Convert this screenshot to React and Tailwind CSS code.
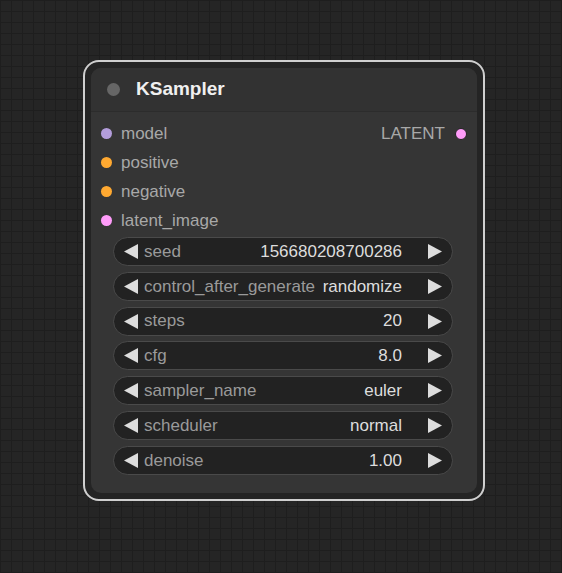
import React from 'react';

const inputs = [
  { name: 'model', color: 'bg-[#b39ddb]' },
  { name: 'positive', color: 'bg-[#ffa931]' },
  { name: 'negative', color: 'bg-[#ffa931]' },
  { name: 'latent_image', color: 'bg-[#ff9cf9]' },
];

const widgets = [
  { label: 'seed', value: '156680208700286' },
  { label: 'control_after_generate', value: 'randomize' },
  { label: 'steps', value: '20' },
  { label: 'cfg', value: '8.0' },
  { label: 'sampler_name', value: 'euler' },
  { label: 'scheduler', value: 'normal' },
  { label: 'denoise', value: '1.00' },
];

const Arrow = ({ dir }) => (
  <svg width="14" height="15" viewBox="0 0 14 15" className="shrink-0">
    {dir === 'left' ? (
      <polygon points="14,0 14,15 0,7.5" fill="#dddddd" />
    ) : (
      <polygon points="0,0 0,15 14,7.5" fill="#dddddd" />
    )}
  </svg>
);

const Widget = ({ label, value }) => (
  <div className="h-[29px] w-[340px] flex items-center rounded-full border border-[#4a4a4a] bg-[#222222] pl-[10px] pr-[10px]">
    <Arrow dir="left" />
    <span className="ml-[6px] text-[#9a9a9a] whitespace-nowrap">{label}</span>
    <span className="ml-auto mr-[26px] text-[#dddddd] whitespace-nowrap">{value}</span>
    <Arrow dir="right" />
  </div>
);

const App = () => {
  return (
    <div
      className="w-[562px] h-[573px] overflow-hidden bg-[#252525] bg-[linear-gradient(to_right,#1e1e1e_1px,transparent_1px),linear-gradient(to_bottom,#1e1e1e_1px,transparent_1px)] bg-[size:11px_11px] pl-[83px] pt-[60px] text-[17px]"
      style={{ fontFamily: '"Liberation Sans", Arial, sans-serif' }}
    >
      {/* selection outline */}
      <div className="w-[402px] h-[441px] rounded-[16px] border-2 border-[#cfcfcf] bg-[#242424] p-[6px]">
        <div className="h-full rounded-[10px] bg-[#353535] overflow-hidden flex flex-col">
          {/* title */}
          <div className="h-[44px] shrink-0 flex items-center bg-[#323232] border-b border-[#2c2c2c] pl-[16px]">
            <div className="w-[13px] h-[13px] rounded-full bg-[#666666]" />
            <span className="ml-[16px] text-[19px] font-bold text-[#f0f0f0]">KSampler</span>
          </div>

          {/* slots */}
          <div className="flex pt-[7px] pl-[10px] pr-[10px]">
            <div className="flex flex-col">
              {inputs.map((input) => (
                <div key={input.name} className="h-[29px] flex items-center">
                  <div className={`w-[11px] h-[11px] rounded-full ${input.color}`} />
                  <span className="ml-[9px] text-[#a8a8a8]">{input.name}</span>
                </div>
              ))}
            </div>
            <div className="ml-auto">
              <div className="h-[29px] flex items-center">
                <span className="text-[#a8a8a8]">LATENT</span>
                <div className="ml-[10px] w-[12px] h-[12px] rounded-full bg-[#ff9cf9] border border-[#222]" />
              </div>
            </div>
          </div>

          {/* widgets */}
          <div className="flex flex-col gap-[5.8px] pl-[22px] pt-[2px]">
            {widgets.map((w) => (
              <Widget key={w.label} label={w.label} value={w.value} />
            ))}
          </div>
        </div>
      </div>
    </div>
  );
};

export default App;
